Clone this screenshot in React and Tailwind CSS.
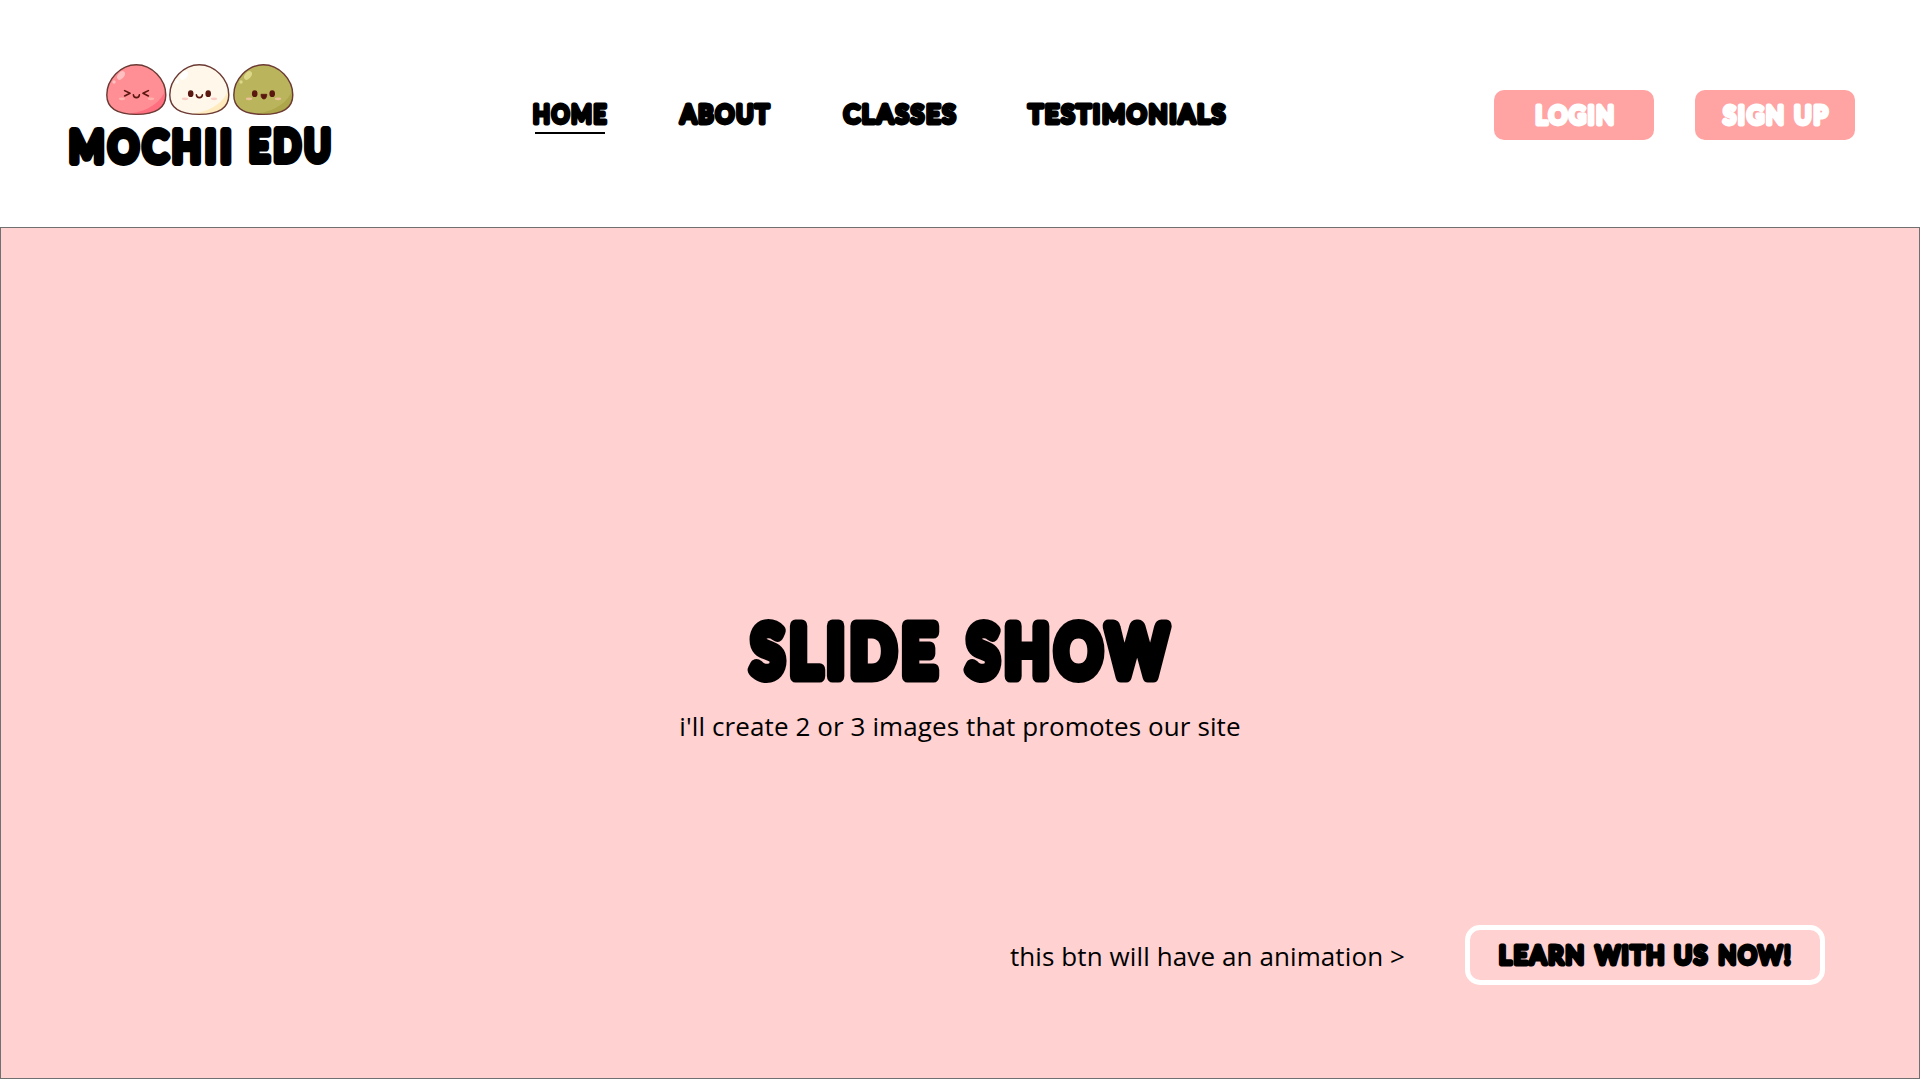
import React from "react";

// Side bearings of the lettering font, in em.
const LEFT = { S: 0.045, L: 0.09, M: 0.09, E: 0.09, H: 0.09, A: 0.01, C: 0.045, T: 0.015, U: 0.08, W: 0.01, N: 0.09 };
const RIGHT = { E: 0.055, W: 0.01, I: 0.095, U: 0.08, T: 0.015, S: 0.035, N: 0.09, P: 0.035, H: 0.09, M: 0.09, "!": 0.07 };

// Rounded bubble lettering. Each word is [text, left edge, width, horizontal scale].
function Bubble({ words, width, height, color = "#000", className = "" }) {
  const size = height * 1.1;
  const r = height * 0.104;
  return (
    <svg className={`block shrink-0 overflow-visible ${className}`} width={width} height={height}>
      {words.map(([text, x, w, s]) => {
        const left = LEFT[text[0]] * size;
        const right = RIGHT[text[text.length - 1]] * size;
        return (
          <text
            key={text}
            transform={`scale(${s} 1)`}
            x={x / s + r - left}
            y={height - r}
            textLength={w / s - 2 * r + left + right}
            fontFamily="Lato, sans-serif"
            fontWeight="500"
            fontSize={size}
            fill={color}
            stroke={color}
            strokeWidth={2 * r}
            strokeLinejoin="round"
          >
            {text}
          </text>
        );
      })}
    </svg>
  );
}

const BODY = "M30.3 .8C46 .8 59.8 15.5 59.8 31C59.8 44.5 50 50.4 30.3 50.4C10.6 50.4 .8 44.5 .8 31C.8 15.5 14.6 .8 30.3 .8Z";
const INK = "#5a1710";

function Mochi({ id, fill, shade, shine, blush, className = "", children }) {
  return (
    <svg className={`block ${className}`} width="61" height="52" viewBox="0 0 61 52">
      <clipPath id={id}>
        <path d={BODY} />
      </clipPath>
      <path d={BODY} fill={fill} />
      <g clipPath={`url(#${id})`}>
        <path d="M61 22C57 36 45 47 24 49.5V52H61Z" fill={shade} />
        <ellipse cx="15" cy="11.5" rx="3" ry="4.9" transform="rotate(40 15 11.5)" fill={shine} />
        <circle cx="8" cy="18" r="1.7" fill={shine} />
      </g>
      <ellipse cx="16" cy="34.8" rx="3.2" ry="1.4" fill={blush} />
      <ellipse cx="45" cy="34.8" rx="3.2" ry="1.4" fill={blush} />
      {children}
      <path d={BODY} fill="none" stroke="#6b3a34" strokeWidth="1.4" />
    </svg>
  );
}

function Eyes() {
  return (
    <g fill={INK}>
      <ellipse cx="21.7" cy="29.7" rx="2.8" ry="3.4" />
      <ellipse cx="39.2" cy="29.7" rx="2.8" ry="3.4" />
    </g>
  );
}

function Smile() {
  return <path d="M27.4 30.8C27.6 34.6 33.2 34.6 33.4 30.8" fill="none" stroke={INK} strokeWidth="1.6" strokeLinecap="round" />;
}

function Logo() {
  return (
    <a href="#" className="flex w-[262px] flex-col pt-16">
      <div className="ml-[37px] flex gap-0.5">
        <Mochi id="pink" fill="#ff8f94" shade="#ff6f80" shine="#ffc0c2" blush="#ffb3b0">
          <path d="M18.6 26.6L24 29.3L18.6 32M42.4 26.6L37 29.3L42.4 32" fill="none" stroke={INK} strokeWidth="1.6" strokeLinecap="round" strokeLinejoin="round" />
          <Smile />
        </Mochi>
        <Mochi id="cream" fill="#fff8ea" shade="#ffebbd" shine="#ffffff" blush="#f9cdc4">
          <Eyes />
          <Smile />
        </Mochi>
        <Mochi id="green" className="ml-px" fill="#bab45c" shade="#aea64a" shine="#dcd888" blush="#ecc19a">
          <Eyes />
          <path d="M28 30.3H33.8C33.8 33.4 32.6 35 30.9 35C29.2 35 28 33.4 28 30.3Z" fill={INK} stroke={INK} strokeWidth=".8" strokeLinejoin="round" />
        </Mochi>
      </div>
      <Bubble className="mt-[11px]" width={262} height={38.5} words={[["MOCHII", 0, 162, 0.88], ["EDU", 180, 82, 0.83]]} />
    </a>
  );
}

export default function App() {
  return (
    <div className="flex h-[1080px] w-[1920px] flex-col overflow-hidden bg-white text-black">
      <header className="flex h-[227px] shrink-0 items-start pl-[69px] pr-[65px]">
        <Logo />
        <nav className="ml-[202px] flex gap-[72px] pt-[102px]">
          <a href="#" className="flex flex-col items-center gap-[6.5px]">
            <Bubble width={74} height={23.5} words={[["HOME", 0, 74, 0.85]]} />
            <span className="h-0.5 w-[70px] bg-black" />
          </a>
          <a href="#"><Bubble width={92} height={23.5} words={[["ABOUT", -0.5, 92.5, 0.9]]} /></a>
          <a href="#"><Bubble width={114} height={23.5} words={[["CLASSES", -0.5, 114.5, 0.94]]} /></a>
          <a href="#" className="-ml-0.5"><Bubble width={199} height={23.5} words={[["TESTIMONIALS", -0.5, 200, 0.94]]} /></a>
        </nav>
        <div className="ml-auto flex gap-[41px] pt-[90px]">
          <button className="flex h-[50px] w-40 items-center justify-center rounded-[10px] bg-[#ffa3a3]">
            <Bubble color="#fff" width={78} height={23.5} className="mb-px" words={[["LOGIN", 0.5, 78.5, 0.89]]} />
          </button>
          <button className="flex h-[50px] w-40 items-center justify-center rounded-[10px] bg-[#ffa3a3]">
            <Bubble color="#fff" width={107} height={23.5} className="mb-px" words={[["SIGN", 0, 62, 0.9], ["UP", 72, 35, 0.9]]} />
          </button>
        </div>
      </header>

      <main className="flex h-[852px] shrink-0 flex-col border border-[#707070] bg-[#ffd1d1]">
        <div className="flex flex-col items-center pt-[392px]">
          <Bubble width={423} height={63} words={[["SLIDE", -0.5, 190, 0.85], ["SHOW", 215.5, 207.5, 0.83]]} />
          <p className="mt-[25px] whitespace-nowrap font-['Open_Sans',sans-serif] text-[26px] leading-9 tracking-[.1px]">
            i'll create 2 or 3 images that promotes our site
          </p>
        </div>
        <div className="mt-auto mb-[93px] mr-[94px] flex items-center justify-end gap-[60px]">
          <p className="whitespace-nowrap pt-0.5 font-['Open_Sans',sans-serif] text-[26px] leading-9 tracking-[.1px]">
            this btn will have an animation &gt;
          </p>
          <button className="flex h-[60px] w-[360px] items-center justify-center rounded-[15px] border-[5px] border-white">
            <Bubble width={292} height={23.5} words={[["LEARN", 0, 85, 0.93], ["WITH", 94.5, 71, 0.91], ["US", 175, 34.5, 0.93], ["NOW!", 219.5, 72.5, 0.89]]} />
          </button>
        </div>
      </main>
    </div>
  );
}
